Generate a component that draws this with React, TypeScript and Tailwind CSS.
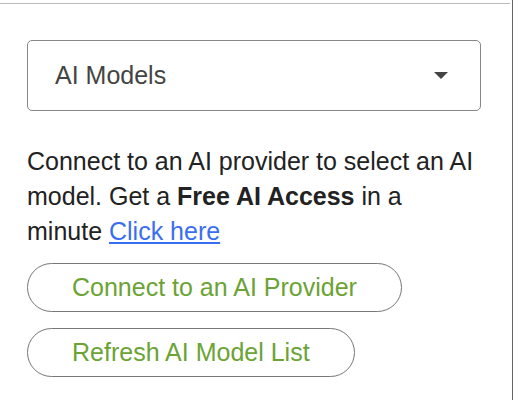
export default function App() {
  return (
    <div className="flex h-[400px] w-[518px] bg-white font-['Liberation_Sans',Arial,sans-serif]">
      <div className="flex w-[513px] flex-col border-r border-[#666]">
        <div className="mt-[3px] h-0 w-[510px] border-t border-[#bbb]" />
        <div className="flex flex-col pl-[27px] pr-[31px] pt-[36px]">
          <div className="flex h-[71px] items-center justify-between rounded-[5px] border border-[#888] pl-[27px] pr-[32px]">
            <span className="text-[25px] text-[#444]">AI Models</span>
            <svg width="14" height="8" viewBox="0 0 14 8">
              <path d="M0 0h14L7 7z" fill="#444" />
            </svg>
          </div>
          <p className="mt-[33px] text-[25px] leading-[35px] text-[#222]">
            Connect to an AI provider to select an AI model. Get a{" "}
            <b>Free AI Access</b> in a minute{" "}
            <a href="#" className="text-[#3a6ef0] underline">
              Click here
            </a>
          </p>
          <div className="mt-[14px] flex flex-col items-start gap-[16px]">
            <button className="h-[49px] rounded-full border border-[#777] px-[44px] text-[25px] text-[#6ba334]">
              Connect to an AI Provider
            </button>
            <button className="h-[49px] rounded-full border border-[#777] px-[44px] text-[25px] text-[#6ba334]">
              Refresh AI Model List
            </button>
          </div>
        </div>
      </div>
    </div>
  );
}
